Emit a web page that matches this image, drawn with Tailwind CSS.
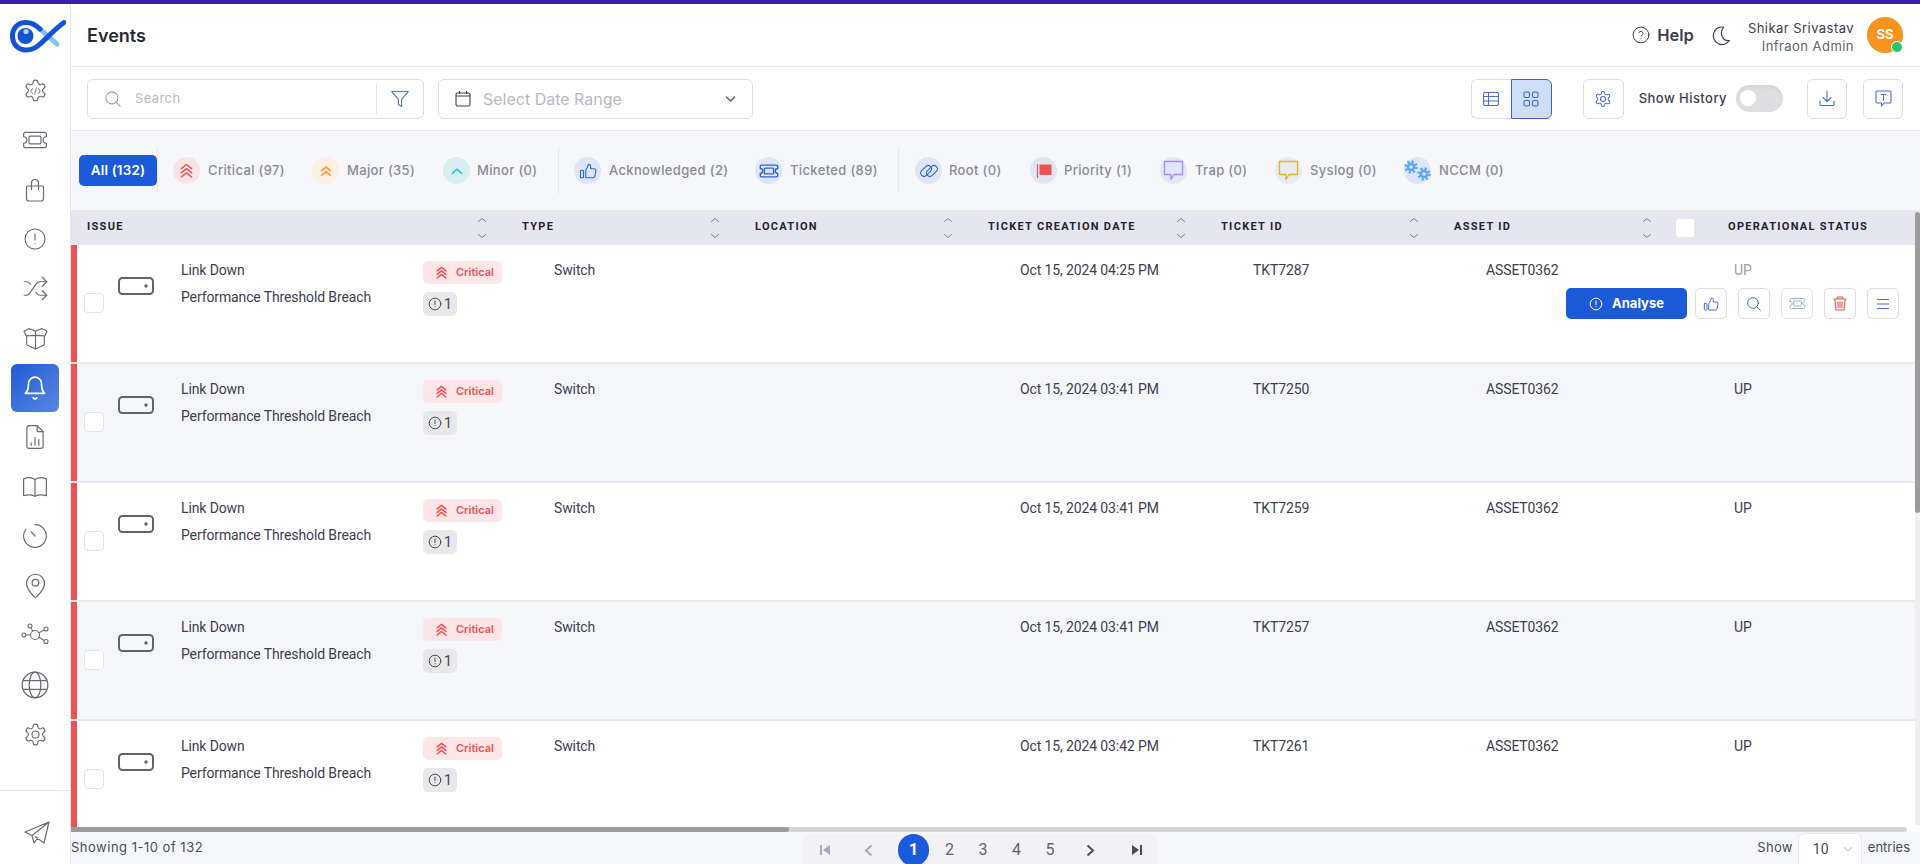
<!DOCTYPE html>
<html lang="en">
<head>
<meta charset="utf-8">
<title>Events</title>
<script src="https://cdn.jsdelivr.net/npm/@tailwindcss/browser@4"></script>
</head>
<body class="w-[1920px] h-[864px] overflow-hidden bg-white font-['Inter',sans-serif] text-[#3e3e4e]">
<svg class="hidden" xmlns="http://www.w3.org/2000/svg">
  <symbol id="gear" viewBox="0 0 24 24" fill="none" stroke="currentColor" stroke-linecap="round" stroke-linejoin="round"><path d="M12.22 2h-.44a2 2 0 0 0-2 2v.18a2 2 0 0 1-1 1.73l-.43.25a2 2 0 0 1-2 0l-.15-.08a2 2 0 0 0-2.73.73l-.22.38a2 2 0 0 0 .73 2.73l.15.1a2 2 0 0 1 1 1.72v.51a2 2 0 0 1-1 1.74l-.15.09a2 2 0 0 0-.73 2.73l.22.38a2 2 0 0 0 2.73.73l.15-.08a2 2 0 0 1 2 0l.43.25a2 2 0 0 1 1 1.73V20a2 2 0 0 0 2 2h.44a2 2 0 0 0 2-2v-.18a2 2 0 0 1 1-1.73l.43-.25a2 2 0 0 1 2 0l.15.08a2 2 0 0 0 2.73-.73l.22-.39a2 2 0 0 0-.73-2.73l-.15-.08a2 2 0 0 1-1-1.74v-.5a2 2 0 0 1 1-1.74l.15-.09a2 2 0 0 0 .73-2.73l-.22-.38a2 2 0 0 0-2.73-.73l-.15.08a2 2 0 0 1-2 0l-.43-.25a2 2 0 0 1-1-1.73V4a2 2 0 0 0-2-2z"/></symbol>
  <symbol id="ticket" viewBox="0 0 24 24" fill="none" stroke="currentColor" stroke-linecap="round" stroke-linejoin="round"><path d="M1.500 9V6.500A1.500 1.500 0 0 1 3 5h18a1.500 1.500 0 0 1 1.500 1.500V9a3 3 0 0 0 0 6v2.500A1.500 1.500 0 0 1 21 19H3a1.500 1.500 0 0 1-1.500-1.500V15a3 3 0 0 0 0-6z"/><rect x="6.500" y="8.500" width="11" height="7" rx="1"/></symbol>
  <symbol id="thumb" viewBox="0 0 24 24" fill="none" stroke="currentColor" stroke-linecap="round" stroke-linejoin="round"><rect x="2" y="11" width="4" height="10" rx="1"/><path d="M9 11l4-8a2.500 2.500 0 0 1 2.500 2.500V9h5a2 2 0 0 1 2 2.300l-1.300 8a2 2 0 0 1-2 1.700H9z"/></symbol>
  <symbol id="search" viewBox="0 0 24 24" fill="none" stroke="currentColor" stroke-linecap="round" stroke-linejoin="round"><circle cx="10.500" cy="10.500" r="8"/><path d="M21.500 21.500l-5.300-5.300"/></symbol>
  <symbol id="chev2" viewBox="0 0 14 16" fill="none" stroke="currentColor" stroke-linecap="round" stroke-linejoin="round"><path d="M1.500 6L7 1.500 12.500 6M1.500 10.500L7 6l5.500 4.500M1.500 15L7 10.500 12.500 15"/></symbol>
  <symbol id="device" viewBox="0 0 36 18" fill="none" stroke="currentColor"><rect x="1" y="1" width="34" height="16" rx="3.500" stroke-width="2"/><circle cx="28" cy="9" r="1.700" fill="currentColor" stroke="none"/></symbol>
  <symbol id="sort" viewBox="0 0 12 22" fill="none" stroke="currentColor" stroke-linecap="round" stroke-linejoin="round"><path d="M2.500 4.500L6 1.500l3.500 3M2.500 17.500L6 20.500l3.500-3"/></symbol>
  <symbol id="info" viewBox="0 0 24 24" fill="none" stroke="currentColor" stroke-linecap="round" stroke-linejoin="round"><circle cx="12" cy="12" r="10"/><path d="M12 7v6M12 16.500v.2"/></symbol>
  <symbol id="cog" viewBox="0 0 14 14" fill="none" stroke="currentColor"><circle cx="7" cy="7" r="3.100" stroke-width="2.600"/><circle cx="7" cy="7" r="5.400" stroke-width="2.600" stroke-dasharray="2.100 2.140"/></symbol>
</svg>

<div class="h-1 bg-[#3a20a8]"></div>
<div class="flex h-[860px]">
  <!-- sidebar -->
  <aside class="w-[71px] shrink-0 border-r border-[#e6e6ec] flex flex-col items-center text-[#6b6b75]">
    <div class="h-[62px] w-full flex items-center justify-center pl-[5px] pt-[3px]">
      <svg width="56" height="33" viewBox="0 0 56 33" fill="none" stroke-linecap="round">
        <path d="M30 9L47 24" stroke="#7cc4f5" stroke-width="5"/>
        <path d="M54 2.500C46 8 38 17 30 24C26 28 21 30 16 30C8 30 2.500 24 2.500 16C2.500 8 8 2.500 16 2.500C22 2.500 26 5 30 9" stroke="#1253d6" stroke-width="5"/>
        <circle cx="15.500" cy="16" r="8" fill="#1253d6"/>
        <circle cx="16" cy="11.500" r="2.600" fill="#a7d4f7"/>
      </svg>
    </div>
    <div class="h-[49.500px] w-full flex items-center justify-center relative">
      <svg width="25" height="25" stroke-width="1.100"><use href="#gear"/></svg>
      <svg class="absolute" width="11" height="8" viewBox="0 0 11 8" fill="none" stroke="currentColor" stroke-width=".9" stroke-linecap="round"><path d="M2.500 1.500L.8 4l1.700 2.500M8.500 1.500L10.200 4 8.500 6.500M6.300 .8L4.700 7.200"/></svg>
    </div>
    <div class="h-[49.500px] w-full flex items-center justify-center"><svg width="26" height="26" stroke-width="1.100"><use href="#ticket"/></svg></div>
    <div class="h-[49.500px] w-full flex items-center justify-center"><svg width="24" height="26" viewBox="0 0 24 26" fill="none" stroke="currentColor" stroke-width="1.200" stroke-linecap="round" stroke-linejoin="round"><path d="M4.500 9h15a1 1 0 0 1 1 1v11.500a2.500 2.500 0 0 1-2.500 2.500H6a2.500 2.500 0 0 1-2.500-2.500V10a1 1 0 0 1 1-1zM8.500 12.500V6a3.500 3.500 0 0 1 7 0v6.500"/></svg></div>
    <div class="h-[49.500px] w-full flex items-center justify-center"><svg width="24" height="24" stroke-width="1.100"><use href="#info"/></svg></div>
    <div class="h-[49.500px] w-full flex items-center justify-center"><svg width="27" height="27" viewBox="0 0 24 24" fill="none" stroke="currentColor" stroke-width="1.100" stroke-linecap="round" stroke-linejoin="round"><path d="M2 18h1.400c1.300 0 2.500-.6 3.300-1.700l6.100-8.600c.7-1.100 2-1.700 3.300-1.700H22"/><path d="m18 2 4 4-4 4"/><path d="M2 6h1.900c1.500 0 2.900.9 3.600 2.200"/><path d="M22 18h-5.900c-1.300 0-2.600-.7-3.300-1.800l-.5-.8"/><path d="m18 14 4 4-4 4"/></svg></div>
    <div class="h-[49.500px] w-full flex items-center justify-center"><svg width="25" height="25" viewBox="0 0 24 24" fill="none" stroke="currentColor" stroke-width="1.100" stroke-linecap="round" stroke-linejoin="round"><path d="M3.500 10v8l8.500 4 8.500-4v-8"/><path d="M12 9v13"/><path d="M1 5l5-2.500L12 5l6-2.500L23 5l-2 4.500L12 9 3 9.500z"/><path d="M12 5v4"/></svg></div>
    <div class="h-[48px] w-[48px] my-[0.750px] rounded-md flex items-center justify-center bg-gradient-to-br from-[#1b5ad8] to-[#5a86df] text-white"><svg width="26" height="26" viewBox="0 0 24 24" fill="none" stroke="currentColor" stroke-width="1.500" stroke-linecap="round" stroke-linejoin="round"><path d="M6 8a6 6 0 0 1 12 0c0 7 3 9 3 9H3s3-2 3-9"/><path d="M10.300 21a1.940 1.940 0 0 0 3.400 0"/></svg></div>
    <div class="h-[49.500px] w-full flex items-center justify-center"><svg width="26" height="26" viewBox="0 0 24 24" fill="none" stroke="currentColor" stroke-width="1.100" stroke-linecap="round" stroke-linejoin="round"><path d="M14 1.500H6.500a2 2 0 0 0-2 2V20.500a2 2 0 0 0 2 2h11a2 2 0 0 0 2-2V7z"/><path d="M14 1.500V7h5.500"/><path d="M8.500 19.500v-2M12 19.500v-7M15.500 19.500v-5"/></svg></div>
    <div class="h-[49.500px] w-full flex items-center justify-center"><svg width="26" height="26" viewBox="0 0 24 24" fill="none" stroke="currentColor" stroke-width="1.100" stroke-linecap="round" stroke-linejoin="round"><path d="M1.500 4.500C5 3 9 3 12 5c3-2 7-2 10.500-.5V20c-3.500-1-7.500-1-10.500.5C9 19 5 19 1.500 20z"/><path d="M12 5v15.500"/></svg></div>
    <div class="h-[49.500px] w-full flex items-center justify-center"><svg width="26" height="26" viewBox="0 0 24 24" fill="none" stroke="currentColor" stroke-width="1.100" stroke-linecap="round"><path d="M12 1.500A10.500 10.500 0 1 1 3.500 5.800"/><path d="M8.500 8l3.500 4"/></svg></div>
    <div class="h-[49.500px] w-full flex items-center justify-center"><svg width="27" height="27" viewBox="0 0 24 24" fill="none" stroke="currentColor" stroke-width="1.100" stroke-linejoin="round"><path d="M20 10c0 6-8 13-8 13s-8-7-8-13a8 8 0 0 1 16 0Z"/><circle cx="12" cy="9.500" r="3"/></svg></div>
    <div class="h-[49.500px] w-full flex items-center justify-center"><svg width="28" height="26" viewBox="0 0 28 26" fill="none" stroke="currentColor" stroke-width="1.100"><circle cx="14" cy="13" r="4.500"/><circle cx="9" cy="4" r="2"/><circle cx="25" cy="7" r="2"/><circle cx="25" cy="19.500" r="2"/><circle cx="3" cy="13" r="2"/><path d="M10 6l2 3.500M23 8l-5.300 3M23 18.500l-5.300-3.500M5 13h4.500"/></svg></div>
    <div class="h-[49.500px] w-full flex items-center justify-center"><svg width="28" height="28" viewBox="0 0 24 24" fill="none" stroke="currentColor" stroke-width="1.100"><circle cx="12" cy="12" r="11"/><ellipse cx="12" cy="12" rx="5" ry="11"/><path d="M2 8.300h20M2 15.700h20"/></svg></div>
    <div class="h-[49.500px] w-full flex items-center justify-center"><svg width="25" height="25" stroke-width="1.100"><use href="#gear"/><circle cx="12.500" cy="12.500" r="3.500" fill="none" stroke="currentColor" stroke-width="1.100"/></svg></div>
    <div class="mt-auto h-[74px] w-full border-t border-[#e6e6ec] flex justify-center pt-[30px] pl-1">
      <svg width="26" height="24" viewBox="0 0 26 24" fill="none" stroke="currentColor" stroke-width="1.200" stroke-linejoin="round"><path d="M25 1L1 11l7 3.500L25 1zM8 14.500L10 22l4-5.500M25 1l-5 21-9-6.500"/></svg>
    </div>
  </aside>

  <main class="flex-1 min-w-0 flex flex-col relative">
    <!-- header -->
    <header class="h-[63px] shrink-0 border-b border-[#e6e6ec] flex items-center pl-4 pr-[17px]">
      <h1 class="text-[18px] font-semibold text-[#2a2a36] pt-[1px]">Events</h1>
      <div class="ml-auto flex items-center text-[#3e3e4e]">
        <svg width="18" height="18" viewBox="0 0 24 24" fill="none" stroke="currentColor" stroke-width="1.300" stroke-linecap="round"><circle cx="12" cy="12" r="10.500"/><path d="M9 9a3 3 0 0 1 5.800 1c0 2-2.800 2.500-2.800 3.500M12 17v.2"/></svg>
        <span class="ml-[7px] text-[16.500px] font-semibold">Help</span>
        <svg class="ml-[17px]" width="20" height="21" viewBox="0 0 24 24" fill="none" stroke="currentColor" stroke-width="1.400" stroke-linejoin="round"><path d="M15 2A10.500 10.500 0 1 0 22 18C14 19 9.500 10 15 2z"/></svg>
        <div class="ml-[17px] pt-[3px] text-right text-[13px] leading-[18px] tracking-[0.45px]">
          <div class="text-[#3e3e4e]">Shikar Srivastav</div>
          <div class="text-[#63636e]">Infraon Admin</div>
        </div>
        <div class="relative ml-[13px] w-9 h-9 rounded-full bg-[#f7941d] text-white text-[13px] font-bold flex items-center justify-center">SS
          <span class="absolute right-0 bottom-0 w-[12px] h-[12px] rounded-full bg-[#28c76f] border border-white"></span>
        </div>
      </div>
    </header>

    <!-- filter bar -->
    <div class="h-[64px] shrink-0 border-b border-[#e6e6ec] flex items-center pl-4 pr-[17px]">
      <div class="w-[337px] h-10 rounded-md border border-[#dcdce8] flex items-center">
        <svg class="ml-4 text-[#9a9ab8]" width="18" height="18" stroke-width="1.400"><use href="#search"/></svg>
        <span class="ml-[13px] text-[13px] text-[#b9b9c6] tracking-[0.4px]">Search</span>
        <div class="ml-auto w-px h-[30px] bg-[#e3e3ec]"></div>
        <svg class="mx-[13px] text-[#4a6fd0]" width="20" height="20" viewBox="0 0 24 24" fill="none" stroke="currentColor" stroke-width="1.300" stroke-linejoin="round"><path d="M2 3h20l-8 9.500V21l-4-2.500v-6z"/></svg>
      </div>
      <div class="ml-[14px] w-[315px] h-10 rounded-md border border-[#dcdce8] flex items-center">
        <svg class="ml-4" width="16" height="17" viewBox="0 0 16 17" fill="none" stroke="#3e3e4e" stroke-width="1.100"><rect x="1" y="3" width="14" height="13" rx="1.500"/><path d="M1 6h14M4.500 1v3M11.500 1v3"/></svg>
        <span class="ml-[12px] text-[16px] text-[#b9b9c6]">Select Date Range</span>
        <svg class="ml-auto mr-[16px]" width="11" height="8" viewBox="0 0 11 8" fill="none" stroke="#63636e" stroke-width="1.500" stroke-linecap="round"><path d="M1.500 2l4 4 4-4"/></svg>
      </div>
      <div class="ml-auto flex h-10">
        <div class="w-[40px] border border-[#dcdce8] border-r-0 rounded-l-md flex items-center justify-center text-[#4a6fd0]">
          <svg width="16" height="14" viewBox="0 0 16 14" fill="none" stroke="currentColor" stroke-width="1.100"><rect x=".5" y=".5" width="15" height="13" rx="1.500"/><path d="M.5 4.500h15M.5 9h15M5.500 .5v13"/></svg>
        </div>
        <div class="w-[41px] border border-[#3b63c9] rounded-r-md bg-[#cfddf7] flex items-center justify-center text-[#3b63c9]">
          <svg width="16" height="16" viewBox="0 0 16 16" fill="none" stroke="currentColor" stroke-width="1.100"><rect x="1" y="1" width="5.500" height="5.500" rx="1.500"/><rect x="9.500" y="1" width="5.500" height="5.500" rx="1.500"/><rect x="1" y="9.500" width="5.500" height="5.500" rx="1.500"/><rect x="9.500" y="9.500" width="5.500" height="5.500" rx="1.500"/></svg>
        </div>
      </div>
      <div class="ml-[31px] w-[41px] h-10 rounded-md border border-[#dcdce8] flex items-center justify-center text-[#4a6fd0]"><svg width="18" height="18" stroke-width="1.400"><use href="#gear"/><circle cx="9" cy="9" r="2.500" fill="none" stroke="currentColor" stroke-width="1.100"/></svg></div>
      <span class="ml-[15px] text-[13px] text-[#3e3e4e] tracking-[0.45px] font-medium whitespace-nowrap">Show History</span>
      <div class="ml-[9px] w-[47px] h-[27px] rounded-full bg-[#dfdfe2] relative shadow-inner"><span class="absolute left-[4px] top-[5px] w-[16px] h-[16px] rounded-full bg-white"></span></div>
      <div class="ml-[24px] w-10 h-10 rounded-md border border-[#dcdce8] flex items-center justify-center text-[#4a6fd0]"><svg width="16" height="17" viewBox="0 0 16 17" fill="none" stroke="currentColor" stroke-width="1.100" stroke-linecap="round" stroke-linejoin="round"><path d="M8 1v10M4 7.500l4 4 4-4M1 11v3.500a1 1 0 0 0 1 1h12a1 1 0 0 0 1-1V11"/></svg></div>
      <div class="ml-4 w-10 h-10 rounded-md border border-[#dcdce8] flex items-center justify-center text-[#4a6fd0]"><svg width="17" height="17" viewBox="0 0 17 17" fill="none" stroke="currentColor" stroke-width="1.100" stroke-linejoin="round" stroke-linecap="round"><path d="M2 1h13a1 1 0 0 1 1 1v10a1 1 0 0 1-1 1H9l-2.500 3v-3H2a1 1 0 0 1-1-1V2a1 1 0 0 1 1-1zM6 4.500h5M8.500 4.500V10"/></svg></div>
    </div>

    <!-- tabs -->
    <div class="h-[79px] shrink-0 bg-[#f6f7fb] flex items-center pl-2 text-[13px] font-medium text-[#8a8a95] tracking-[0.35px] whitespace-nowrap">
      <div class="w-[78px] h-[31px] rounded-[5px] bg-[#1b5ad8] text-white text-[13.500px] font-semibold flex items-center justify-center tracking-[0.15px]">All (132)</div>
      <div class="w-px h-[47px] bg-[#e8e8f0]"></div>
      <div class="ml-[15px] flex items-center">
        <span class="w-[27px] h-[27px] rounded-full bg-[#f8e3e5] flex items-center justify-center text-[#ea5455]"><svg width="13" height="15" stroke-width="1.600"><use href="#chev2"/></svg></span>
        <span class="ml-[8px] w-[76px]">Critical (97)</span>
      </div>
      <div class="ml-[28px] flex items-center">
        <span class="w-[27px] h-[27px] rounded-full bg-[#fdefe2] flex items-center justify-center text-[#ff9f43]"><svg width="14" height="14" viewBox="0 0 24 24" fill="none" stroke="currentColor" stroke-width="3"><path d="M4 12l8-7 8 7M4 20l8-7 8 7"/></svg></span>
        <span class="ml-[8px] w-[67px]">Major (35)</span>
      </div>
      <div class="ml-[29px] flex items-center">
        <span class="w-[27px] h-[27px] rounded-full bg-[#daedf0] flex items-center justify-center text-[#2fc6e6]"><svg width="14" height="14" viewBox="0 0 24 24" fill="none" stroke="currentColor" stroke-width="3" stroke-linecap="round"><path d="M4 16l8-7 8 7"/></svg></span>
        <span class="ml-[7px] w-[60px]">Minor (0)</span>
      </div>
      <div class="ml-[21px] w-px h-[47px] bg-[#e8e8f0]"></div>
      <div class="ml-[15px] flex items-center">
        <span class="w-[27px] h-[27px] rounded-full bg-[#dee6f6] flex items-center justify-center text-[#2f62d8]"><svg width="18" height="18" stroke-width="1.500"><use href="#thumb"/></svg></span>
        <span class="ml-[8px] w-[119px]">Acknowledged (2)</span>
      </div>
      <div class="ml-[27px] flex items-center">
        <span class="w-[27px] h-[27px] rounded-full bg-[#dee6f6] flex items-center justify-center text-[#2f62d8]"><svg width="20" height="20" stroke-width="1.600"><use href="#ticket"/></svg></span>
        <span class="ml-[8px] w-[87px]">Ticketed (89)</span>
      </div>
      <div class="ml-[21px] w-px h-[47px] bg-[#e8e8f0]"></div>
      <div class="ml-[16px] flex items-center">
        <span class="w-[27px] h-[27px] rounded-full bg-[#dee6f6] flex items-center justify-center text-[#2f62d8]"><svg width="20" height="20" viewBox="0 0 24 24" fill="none" stroke="currentColor" stroke-width="1.200"><rect x="1" y="8" width="15" height="8" rx="4" transform="rotate(-45 8.500 12)"/><rect x="8" y="8" width="15" height="8" rx="4" transform="rotate(-45 15.500 12)"/></svg></span>
        <span class="ml-[7px] w-[53px]">Root (0)</span>
      </div>
      <div class="ml-[28px] flex items-center">
        <span class="w-[27px] h-[27px] rounded-full bg-[#dee6f6] flex items-center justify-center"><svg width="16" height="16" viewBox="0 0 16 16"><path d="M3.500 1.500h12v10.500h-12z" fill="#ea5455"/><path d="M1.500 1v14" stroke="#ea5455" stroke-width="1.200"/></svg></span>
        <span class="ml-[7px] w-[68px]">Priority (1)</span>
      </div>
      <div class="ml-[28px] flex items-center">
        <span class="w-[27px] h-[27px] rounded-full bg-[#e3e6f8] flex items-center justify-center text-[#a48cf5]"><svg width="21" height="21" viewBox="0 0 21 21" fill="none" stroke="currentColor" stroke-width="1.300" stroke-linejoin="round"><path d="M1.500 1.500h18v13h-8.500l-3 5v-5H1.500z"/></svg></span>
        <span class="ml-[8px] w-[52px]">Trap (0)</span>
      </div>
      <div class="ml-[28px] flex items-center">
        <span class="w-[27px] h-[27px] rounded-full bg-[#e9ebf2] flex items-center justify-center text-[#e7ae28]"><svg width="21" height="21" viewBox="0 0 21 21" fill="none" stroke="currentColor" stroke-width="1.300" stroke-linejoin="round"><path d="M1.500 1.500h18v13h-8.500l-3 5v-5H1.500z"/></svg></span>
        <span class="ml-[8px] w-[66px]">Syslog (0)</span>
      </div>
      <div class="ml-[28px] flex items-center">
        <span class="w-[27px] h-[27px] rounded-full bg-[#dee6f6] relative text-[#5aa8f5]">
          <svg class="absolute left-0 top-[3px]" width="14" height="14"><use href="#cog"/></svg>
          <svg class="absolute left-[13px] top-[10px]" width="14" height="14"><use href="#cog"/></svg>
        </span>
        <span class="ml-[8px]">NCCM (0)</span>
      </div>
    </div>

    <!-- table header -->
    <div class="h-[35px] shrink-0 bg-[#e6e6f0] grid grid-cols-[435px_233px_233px_233px_233px_233px_1fr] items-center font-['Roboto',sans-serif] text-[11px] font-bold tracking-[1.300px] text-[#23232f] uppercase">
      <div class="pl-4 pr-[18px] flex items-center justify-between"><span>Issue</span><svg class="text-[#7d7d88]" width="12" height="22" stroke-width="1"><use href="#sort"/></svg></div>
      <div class="pl-4 pr-[18px] flex items-center justify-between"><span>Type</span><svg class="text-[#7d7d88]" width="12" height="22" stroke-width="1"><use href="#sort"/></svg></div>
      <div class="pl-4 pr-[18px] flex items-center justify-between"><span>Location</span><svg class="text-[#7d7d88]" width="12" height="22" stroke-width="1"><use href="#sort"/></svg></div>
      <div class="pl-4 pr-[18px] flex items-center justify-between"><span>Ticket Creation Date</span><svg class="text-[#7d7d88]" width="12" height="22" stroke-width="1"><use href="#sort"/></svg></div>
      <div class="pl-4 pr-[18px] flex items-center justify-between"><span>Ticket ID</span><svg class="text-[#7d7d88]" width="12" height="22" stroke-width="1"><use href="#sort"/></svg></div>
      <div class="pl-4 pr-[18px] flex items-center justify-between"><span>Asset ID</span><svg class="text-[#7d7d88]" width="12" height="22" stroke-width="1"><use href="#sort"/></svg></div>
      <div class="flex items-center pl-[5px]"><span class="w-[18px] h-[18px] rounded-[3px] bg-white"></span><span class="ml-[34px] whitespace-nowrap">Operational Status</span></div>
    </div>

    <!-- rows -->
    <div class="relative h-[582px] shrink-0 overflow-hidden font-['Roboto',sans-serif] text-[14px] tracking-[-0.12px] text-[#3e3e4e]">

      <div class="relative h-[119px] border-b-2 border-[#e8e8ee] bg-white">
        <div class="h-[117px] border-l-[6px] border-[#ea5455] grid grid-cols-[429px_233px_233px_233px_233px_233px_1fr]">
          <div class="flex">
            <span class="mt-[48px] ml-[7px] w-5 h-5 rounded-[4px] border border-[#e3e3ee] bg-white"></span>
            <svg class="mt-[32px] ml-[14px] text-[#63636e]" width="36" height="18"><use href="#device"/></svg>
            <div class="ml-[27px] pt-[16px] w-[242px] leading-[18px]"><div>Link Down</div><div class="mt-[9px]">Performance Threshold Breach</div></div>
            <div class="pt-[16px]">
              <div class="w-[79px] h-[23px] rounded-[5px] bg-[#fde6e8] text-[#ea5455] font-['Inter',sans-serif] text-[11px] tracking-normal font-semibold flex items-center"><svg class="ml-[13px]" width="11" height="13" stroke-width="2"><use href="#chev2"/></svg><span class="ml-[9px]">Critical</span></div>
              <div class="mt-2 w-[34px] h-[24px] rounded-[5px] bg-[#e8e8ea] flex items-center justify-center gap-[2px] text-[15px] text-[#4b4b58]"><svg width="14" height="14" stroke-width="1.700"><use href="#info"/></svg><span>1</span></div>
            </div>
          </div>
          <div class="pl-12 pt-[16px] leading-[18px]">Switch</div>
          <div></div>
          <div class="pl-12 pt-[16px] leading-[18px]">Oct 15, 2024 04:25 PM</div>
          <div class="pl-12 pt-[16px] leading-[18px]">TKT7287</div>
          <div class="pl-12 pt-[16px] leading-[18px]">ASSET0362</div>
          <div class="pl-[63px] pt-[16px] leading-[18px] text-[#a0a0aa]">UP</div>
        </div>
        <div class="absolute right-[21px] top-[43px] flex items-center tracking-normal">
          <div class="w-[121px] h-[31px] rounded-[5px] bg-[#1b5ad8] text-white font-['Inter',sans-serif] text-[13px] font-bold flex items-center justify-center gap-[9px]"><svg width="14" height="14" stroke-width="1.700"><use href="#info"/></svg>Analyse</div>
          <div class="ml-2 w-8 h-[31px] rounded-[5px] border border-[#dcdce4] flex items-center justify-center text-[#4a6fd0]"><svg width="16" height="16" stroke-width="1.500"><use href="#thumb"/></svg></div>
          <div class="ml-[11px] w-8 h-[31px] rounded-[5px] border border-[#dcdce4] flex items-center justify-center text-[#4a6fd0]"><svg width="16" height="16" stroke-width="1.500"><use href="#search"/></svg></div>
          <div class="ml-[11px] w-8 h-[31px] rounded-[5px] border border-[#e6e6ec] flex items-center justify-center text-[#9db2e4]"><svg width="17" height="17" stroke-width="1.400"><use href="#ticket"/></svg></div>
          <div class="ml-[11px] w-8 h-[31px] rounded-[5px] border border-[#dcdce4] flex items-center justify-center text-[#ea5455]"><svg width="14" height="15" viewBox="0 0 14 15" fill="none" stroke="currentColor" stroke-width="1.100" stroke-linejoin="round"><path d="M.5 3h13M4.500 3V1h5v2M2 3l.8 11h8.400L12 3M5 5.500V12M7 5.500V12M9 5.500V12"/></svg></div>
          <div class="ml-[11px] w-8 h-[31px] rounded-[5px] border border-[#dcdce4] flex items-center justify-center text-[#4a6fd0]"><svg width="14" height="12" viewBox="0 0 14 12" fill="none" stroke="currentColor" stroke-width="1.200"><path d="M1 1.500h12M1 6h12M1 10.500h12"/></svg></div>
        </div>
      </div>

      <div class="h-[119px] border-b-2 border-[#e8e8ee] bg-[#f5f6fa]">
        <div class="h-[117px] border-l-[6px] border-[#ea5455] grid grid-cols-[429px_233px_233px_233px_233px_233px_1fr]">
          <div class="flex">
            <span class="mt-[48px] ml-[7px] w-5 h-5 rounded-[4px] border border-[#e3e3ee] bg-white"></span>
            <svg class="mt-[32px] ml-[14px] text-[#63636e]" width="36" height="18"><use href="#device"/></svg>
            <div class="ml-[27px] pt-[16px] w-[242px] leading-[18px]"><div>Link Down</div><div class="mt-[9px]">Performance Threshold Breach</div></div>
            <div class="pt-[16px]">
              <div class="w-[79px] h-[23px] rounded-[5px] bg-[#fde6e8] text-[#ea5455] font-['Inter',sans-serif] text-[11px] tracking-normal font-semibold flex items-center"><svg class="ml-[13px]" width="11" height="13" stroke-width="2"><use href="#chev2"/></svg><span class="ml-[9px]">Critical</span></div>
              <div class="mt-2 w-[34px] h-[24px] rounded-[5px] bg-[#e8e8ea] flex items-center justify-center gap-[2px] text-[15px] text-[#4b4b58]"><svg width="14" height="14" stroke-width="1.700"><use href="#info"/></svg><span>1</span></div>
            </div>
          </div>
          <div class="pl-12 pt-[16px] leading-[18px]">Switch</div>
          <div></div>
          <div class="pl-12 pt-[16px] leading-[18px]">Oct 15, 2024 03:41 PM</div>
          <div class="pl-12 pt-[16px] leading-[18px]">TKT7250</div>
          <div class="pl-12 pt-[16px] leading-[18px]">ASSET0362</div>
          <div class="pl-[63px] pt-[16px] leading-[18px]">UP</div>
        </div>
      </div>

      <div class="h-[119px] border-b-2 border-[#e8e8ee] bg-white">
        <div class="h-[117px] border-l-[6px] border-[#ea5455] grid grid-cols-[429px_233px_233px_233px_233px_233px_1fr]">
          <div class="flex">
            <span class="mt-[48px] ml-[7px] w-5 h-5 rounded-[4px] border border-[#e3e3ee] bg-white"></span>
            <svg class="mt-[32px] ml-[14px] text-[#63636e]" width="36" height="18"><use href="#device"/></svg>
            <div class="ml-[27px] pt-[16px] w-[242px] leading-[18px]"><div>Link Down</div><div class="mt-[9px]">Performance Threshold Breach</div></div>
            <div class="pt-[16px]">
              <div class="w-[79px] h-[23px] rounded-[5px] bg-[#fde6e8] text-[#ea5455] font-['Inter',sans-serif] text-[11px] tracking-normal font-semibold flex items-center"><svg class="ml-[13px]" width="11" height="13" stroke-width="2"><use href="#chev2"/></svg><span class="ml-[9px]">Critical</span></div>
              <div class="mt-2 w-[34px] h-[24px] rounded-[5px] bg-[#e8e8ea] flex items-center justify-center gap-[2px] text-[15px] text-[#4b4b58]"><svg width="14" height="14" stroke-width="1.700"><use href="#info"/></svg><span>1</span></div>
            </div>
          </div>
          <div class="pl-12 pt-[16px] leading-[18px]">Switch</div>
          <div></div>
          <div class="pl-12 pt-[16px] leading-[18px]">Oct 15, 2024 03:41 PM</div>
          <div class="pl-12 pt-[16px] leading-[18px]">TKT7259</div>
          <div class="pl-12 pt-[16px] leading-[18px]">ASSET0362</div>
          <div class="pl-[63px] pt-[16px] leading-[18px]">UP</div>
        </div>
      </div>

      <div class="h-[119px] border-b-2 border-[#e8e8ee] bg-[#f5f6fa]">
        <div class="h-[117px] border-l-[6px] border-[#ea5455] grid grid-cols-[429px_233px_233px_233px_233px_233px_1fr]">
          <div class="flex">
            <span class="mt-[48px] ml-[7px] w-5 h-5 rounded-[4px] border border-[#e3e3ee] bg-white"></span>
            <svg class="mt-[32px] ml-[14px] text-[#63636e]" width="36" height="18"><use href="#device"/></svg>
            <div class="ml-[27px] pt-[16px] w-[242px] leading-[18px]"><div>Link Down</div><div class="mt-[9px]">Performance Threshold Breach</div></div>
            <div class="pt-[16px]">
              <div class="w-[79px] h-[23px] rounded-[5px] bg-[#fde6e8] text-[#ea5455] font-['Inter',sans-serif] text-[11px] tracking-normal font-semibold flex items-center"><svg class="ml-[13px]" width="11" height="13" stroke-width="2"><use href="#chev2"/></svg><span class="ml-[9px]">Critical</span></div>
              <div class="mt-2 w-[34px] h-[24px] rounded-[5px] bg-[#e8e8ea] flex items-center justify-center gap-[2px] text-[15px] text-[#4b4b58]"><svg width="14" height="14" stroke-width="1.700"><use href="#info"/></svg><span>1</span></div>
            </div>
          </div>
          <div class="pl-12 pt-[16px] leading-[18px]">Switch</div>
          <div></div>
          <div class="pl-12 pt-[16px] leading-[18px]">Oct 15, 2024 03:41 PM</div>
          <div class="pl-12 pt-[16px] leading-[18px]">TKT7257</div>
          <div class="pl-12 pt-[16px] leading-[18px]">ASSET0362</div>
          <div class="pl-[63px] pt-[16px] leading-[18px]">UP</div>
        </div>
      </div>

      <div class="h-[119px] bg-white">
        <div class="h-[119px] border-l-[6px] border-[#ea5455] grid grid-cols-[429px_233px_233px_233px_233px_233px_1fr]">
          <div class="flex">
            <span class="mt-[48px] ml-[7px] w-5 h-5 rounded-[4px] border border-[#e3e3ee] bg-white"></span>
            <svg class="mt-[32px] ml-[14px] text-[#63636e]" width="36" height="18"><use href="#device"/></svg>
            <div class="ml-[27px] pt-[16px] w-[242px] leading-[18px]"><div>Link Down</div><div class="mt-[9px]">Performance Threshold Breach</div></div>
            <div class="pt-[16px]">
              <div class="w-[79px] h-[23px] rounded-[5px] bg-[#fde6e8] text-[#ea5455] font-['Inter',sans-serif] text-[11px] tracking-normal font-semibold flex items-center"><svg class="ml-[13px]" width="11" height="13" stroke-width="2"><use href="#chev2"/></svg><span class="ml-[9px]">Critical</span></div>
              <div class="mt-2 w-[34px] h-[24px] rounded-[5px] bg-[#e8e8ea] flex items-center justify-center gap-[2px] text-[15px] text-[#4b4b58]"><svg width="14" height="14" stroke-width="1.700"><use href="#info"/></svg><span>1</span></div>
            </div>
          </div>
          <div class="pl-12 pt-[16px] leading-[18px]">Switch</div>
          <div></div>
          <div class="pl-12 pt-[16px] leading-[18px]">Oct 15, 2024 03:42 PM</div>
          <div class="pl-12 pt-[16px] leading-[18px]">TKT7261</div>
          <div class="pl-12 pt-[16px] leading-[18px]">ASSET0362</div>
          <div class="pl-[63px] pt-[16px] leading-[18px]">UP</div>
        </div>
      </div>
    </div>

    <!-- scrollbars -->
    <div class="absolute right-0 top-[208px] w-[5px] h-[613px] bg-[#efeff2]"><div class="w-full h-[301px] bg-[#9c9c9c] rounded-sm"></div></div>
    <div class="h-[5px] shrink-0 mr-[13px] bg-[#d6d6d8] rounded-r"><div class="h-full w-[718px] bg-[#9c9c9c] rounded-r"></div></div>

    <!-- footer -->
    <footer class="flex-1 min-h-0 bg-[#f6f7fb] flex items-center text-[13px] text-[#4b4b58] overflow-hidden relative">
      <span class="tracking-[0.5px]">Showing 1-10 of 132</span>
      <div class="absolute left-[730px] top-[2px] h-[40px] w-[358px] rounded-t-[12px] bg-[#f1f1f6] flex items-start font-['Roboto',sans-serif] text-[16px] text-[#63636e]">
        <div class="w-[43px] h-[32px] pl-[4px] flex items-center justify-center text-[#a6a6c0]"><svg width="12" height="12" viewBox="0 0 12 12" fill="currentColor"><path d="M1 1h2v10H1zM11 1v10L4 6z"/></svg></div>
        <div class="w-[48px] h-[32px] flex items-center justify-center text-[#a6a6c0]"><svg width="9" height="13" viewBox="0 0 9 13" fill="none" stroke="currentColor" stroke-width="2"><path d="M7.500 1.500L2 6.500l5.500 5"/></svg></div>
        <div class="ml-[6px] w-[31px] h-[32px] rounded-full bg-[#1b5ad8] text-white font-bold flex items-center justify-center">1</div>
        <div class="ml-[4px] w-[33px] h-[32px] flex items-center justify-center">2</div>
        <div class="w-[34px] h-[32px] flex items-center justify-center">3</div>
        <div class="w-[33px] h-[32px] flex items-center justify-center">4</div>
        <div class="w-[34px] h-[32px] flex items-center justify-center">5</div>
        <div class="ml-[6px] w-[34px] h-[32px] flex items-center justify-center text-[#4b4b58]"><svg width="9" height="13" viewBox="0 0 9 13" fill="none" stroke="currentColor" stroke-width="2"><path d="M1.500 1.500L7 6.500l-5.500 5"/></svg></div>
        <div class="ml-[13px] w-[34px] h-[32px] flex items-center justify-center text-[#4b4b58]"><svg width="12" height="12" viewBox="0 0 12 12" fill="currentColor"><path d="M9 1h2v10H9zM1 1v10l7-5z"/></svg></div>
      </div>
      <div class="ml-auto flex items-center pr-[10px] h-full">
        <span class="tracking-[0.3px]">Show</span>
        <div class="ml-[5px] w-[64px] h-[32px] mt-[2px] rounded-t-[6px] border border-[#e8e8ee] border-b-0 bg-white flex items-center pl-[14px] font-['Roboto',sans-serif] text-[14px]">10<svg class="ml-auto mr-[8px]" width="10" height="7" viewBox="0 0 10 7" fill="none" stroke="#d0d0d8" stroke-width="1.200"><path d="M1 1l4 4 4-4"/></svg></div>
        <span class="ml-[6px]">entries</span>
      </div>
    </footer>
  </main>
</div>
</body>
</html>
